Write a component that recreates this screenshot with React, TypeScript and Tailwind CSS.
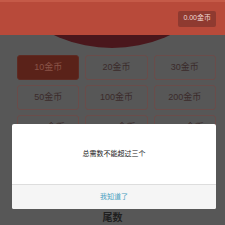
const AMOUNTS = ['10金币', '20金币', '30金币', '50金币', '100金币', '200金币', '500金币', '1000金币', '2000金币'];

export default function App() {
  return (
    <div
      className="relative h-[225px] w-[225px] overflow-hidden bg-[#575757]"
      style={{ fontFamily: '"Liberation Sans", "Noto Sans CJK SC", sans-serif' }}
    >
      {/* header */}
      <div className="relative z-10 flex h-[35px] items-center justify-end border-t-2 border-[#c55a48] bg-[#b84a3a] pr-[9px]">
        <span className="flex h-[16px] items-center rounded-[2px] bg-[#8f3a30] px-[5px] text-[7px] text-[#f0d8d2]">
          0.00金币
        </span>
      </div>
      {/* circle peeking under header */}
      <div className="relative h-[15px]">
        <div className="absolute left-[-26px] top-[-263px] h-[276px] w-[276px] rounded-full bg-[#4a171c]" />
      </div>

      <div className="mt-[5px] grid grid-cols-3 gap-x-[6px] gap-y-[5px] pl-[17px] pr-[9px]">
        {AMOUNTS.map((a, i) => (
          <div
            key={a}
            className={
              i === 0
                ? 'flex h-[25px] items-center justify-center rounded-[3px] border border-[#5e2a22] bg-[#5a2219] text-[9px] text-[#8a5448]'
                : 'flex h-[25px] items-center justify-center rounded-[3px] border border-[#6a4c4a] text-[9px] text-[#3b2b2b]'
            }
          >
            {a}
          </div>
        ))}
      </div>

      <div className="mt-[71px] text-center text-[10px] font-bold leading-[14px] text-[#1f1f1f]">尾数</div>

      {/* dialog */}
      <div className="absolute left-[12px] top-[124px] w-[204px] overflow-hidden rounded-[2px] bg-white">
        <div className="flex h-[60px] items-center justify-center text-[7px] text-[#222]">
          总需数不能超过三个
        </div>
        <div className="flex h-[25px] items-center justify-center border-t border-[#ddd] bg-[#f5f5f5] text-[7px] text-[#4b9fbf]">
          我知道了
        </div>
      </div>
    </div>
  );
}
